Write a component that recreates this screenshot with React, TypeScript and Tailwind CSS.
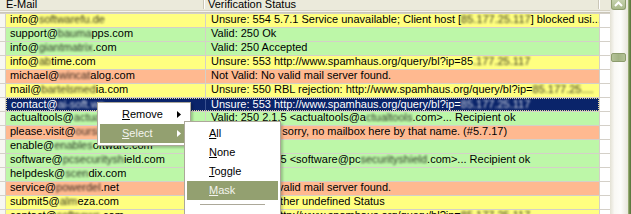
import React from 'react';

type Part = string | { b: string };

interface Row {
  email: Part[];
  status: Part[];
  tone: 'y' | 'g' | 'o' | 'sel';
}

const TONES: Record<Row['tone'], string> = {
  y: 'bg-[#ffff80] text-black',
  g: 'bg-[#bdf7a8] text-black',
  o: 'bg-[#ffb990] text-black',
  sel: 'bg-[#0a246a] text-white',
};

const ROWS: Row[] = [
  { tone: 'y', email: ['info@', { b: 'softwarefu.de' }], status: ['Unsure: 554 5.7.1 Service unavailable; Client host [', { b: '85.177.25.117' }, '] blocked usi...'] },
  { tone: 'g', email: ['support@', { b: 'bauma' }, 'pps.com'], status: ['Valid: 250 Ok'] },
  { tone: 'g', email: ['info@', { b: 'giantmatrix' }, '.com'], status: ['Valid: 250 Accepted'] },
  { tone: 'y', email: ['info@', { b: 'ab' }, 'time.com'], status: ['Unsure: 553 http://www.spamhaus.org/query/bl?ip=85', { b: '.177.25.117' }] },
  { tone: 'o', email: ['michael@', { b: 'wincat' }, 'alog.com'], status: ['Not Valid: No valid mail server found.'] },
  { tone: 'y', email: ['mail@', { b: 'bartelsmed' }, 'ia.com'], status: ['Unsure: 550 RBL rejection: http://www.spamhaus.org/query/bl?ip=', { b: '85.177.25....' }] },
  { tone: 'sel', email: ['contact@', { b: 'ai-soft.wa' }], status: ['Unsure: 553 http://www.spamhaus.org/query/bl?ip=', { b: '85.177.25.117' }] },
  { tone: 'g', email: ['actualtools@', { b: 'actualtools.com' }], status: ['Valid: 250 2.1.5 <actualtools@a', { b: 'ctualtools' }, '.com>... Recipient ok'] },
  { tone: 'o', email: ['please.visit@', { b: 'oursite.com' }], status: ['Not Valid: 550 sorry, no mailbox here by that name. (#5.7.17)'] },
  { tone: 'g', email: ['enable@', { b: 'enables' }, 'oftware.com'], status: ['Valid: 250 OK'] },
  { tone: 'g', email: ['software@', { b: 'pcsecuritysh' }, 'ield.com'], status: ['Valid: 250 2.1.5 <software@pc', { b: 'securityshield' }, '.com>... Recipient ok'] },
  { tone: 'g', email: ['helpdesk@', { b: 'scen' }, 'dix.com'], status: ['Valid: 250 Ok'] },
  { tone: 'o', email: ['service@', { b: 'powerdel' }, '.net'], status: ['Not Valid: No valid mail server found.'] },
  { tone: 'y', email: ['submit5@', { b: 'alm' }, 'eza.com'], status: ['Unsure: Any other undefined Status'] },
  { tone: 'y', email: ['contact@', { b: 'softnews' }, '.com'], status: ['Unsure: 553 http://www.spamhaus.org/query/bl?ip=', { b: '85.177.25.117' }] },
];

function Text({ parts }: { parts: Part[] }) {
  return (
    <>
      {parts.map((p, i) =>
        typeof p === 'string' ? (
          <span key={i}>{p}</span>
        ) : (
          <span key={i} className="inline-block blur-[1.3px] opacity-80">
            {p.b}
          </span>
        )
      )}
    </>
  );
}

function Arrow({ white }: { white?: boolean }) {
  return (
    <svg width="4" height="7" viewBox="0 0 4 7" className="ml-auto">
      <polygon points="0,0 4,3.5 0,7" fill={white ? '#ffffff' : '#000000'} />
    </svg>
  );
}

function MenuItem({ label, hot, active, sub }: { label: string; hot: number; active?: boolean; sub?: boolean }) {
  return (
    <div
      className={`flex items-center h-[19px] pl-[22px] pr-[7px] ${
        active ? 'bg-[#93a070] text-[#f4f4ee]' : 'text-black'
      }`}
    >
      <span>
        {label.slice(0, hot)}
        <u className="underline-offset-1">{label.slice(hot, hot + 1)}</u>
        {label.slice(hot + 1)}
      </span>
      {sub && <Arrow white={active} />}
    </div>
  );
}

export default function App() {
  return (
    <div className="relative w-[631px] h-[214px] overflow-hidden bg-white font-['Liberation_Sans',Arial,sans-serif] text-[11px]">
      <div className="flex h-full">
        {/* list */}
        <div className="w-[610px] h-full overflow-hidden">
          {/* header */}
          <div className="flex h-[10px] bg-[#ebeadb] overflow-hidden leading-[13px] text-black">
            <div className="w-[203px] pl-[6px] -mt-[2px]">E-Mail</div>
            <div className="w-px h-[9px] bg-[#cbc7b8]" />
            <div className="w-px h-[9px] bg-white" />
            <div className="w-[393px] pl-[3px] -mt-[2px]">Verification Status</div>
            <div className="w-px h-[9px] bg-[#cbc7b8]" />
            <div className="w-px h-[9px] bg-white" />
          </div>
          <div className="h-px bg-[#d6d2c2]" />
          <div className="h-px bg-[#f4f3ee]" />
          <div className="h-px bg-[#cbc7b8]" />
          <div className="h-px bg-[#d4d0c8]" />

          {/* rows */}
          {ROWS.map((r, i) => (
            <div key={i} className="flex h-[14px] border-b border-[#d4d0c8] leading-[11px]">
              <div className="w-[5px] bg-[#f7f7f3]" />
              <div className="w-px bg-[#d4d0c8]" />
              <div
                className={`w-[199px] pl-[4px] overflow-hidden whitespace-nowrap ${TONES[r.tone]} ${
                  r.tone === 'sel' ? 'border-y border-l border-dotted border-[#e9d79a]' : ''
                }`}
              >
                <Text parts={r.email} />
              </div>
              <div className={`w-px ${r.tone === 'sel' ? 'bg-[#3a5290]' : 'bg-[#d4d0c8]'}`} />
              <div
                className={`w-[393px] pl-[5px] overflow-hidden whitespace-nowrap ${TONES[r.tone]} ${
                  r.tone === 'sel' ? 'border-y border-r border-dotted border-[#e9d79a]' : ''
                }`}
              >
                <Text parts={r.status} />
              </div>
              <div className="w-px bg-[#d4d0c8]" />
              <div className="flex-1 bg-white" />
            </div>
          ))}
        </div>

        {/* scrollbar */}
        <div className="w-[18px] h-full flex flex-col bg-[linear-gradient(to_right,#e3e1d4,#f9f8f4_25%,#fdfdfb_60%,#e8e6dc)]">
          <div className="shrink-0 ml-[1px] w-[15px] h-[10px] rounded-b-[3px] border border-t-0 border-[#8d9c6d] bg-[linear-gradient(to_bottom,#c5d1ad,#a9b98a)] flex items-start justify-center">
            <svg width="9" height="6" viewBox="0 0 9 6" className="mt-[1px]">
              <polyline points="1,5 4.5,1.5 8,5" fill="none" stroke="#ffffff" strokeWidth="2" />
            </svg>
          </div>
          <div className="shrink-0 mt-[43px] ml-[1px] w-[15px] h-[9px] rounded-[2px] border border-[#8d9c6d] bg-[linear-gradient(to_right,#b4c297,#a3b384,#b4c297)]" />
        </div>

        {/* window frame */}
        <div className="w-[3px] h-full bg-[linear-gradient(to_right,#a8ba86,#6f8a4c,#55703a)]" />
      </div>

      {/* context menu */}
      <div className="absolute left-[97px] top-[102px] w-[94px] p-[2px] bg-white border border-[#aca899] shadow-[2px_2px_2px_rgba(0,0,0,0.2)] leading-[13px]">
        <MenuItem label="Remove" hot={0} sub />
        <MenuItem label="Select" hot={0} sub active />
      </div>

      {/* sub menu */}
      <div className="absolute left-[184px] top-[121px] w-[97px] p-[2px] bg-white border border-[#aca899] shadow-[2px_2px_2px_rgba(0,0,0,0.2)] leading-[13px]">
        <MenuItem label="All" hot={0} />
        <MenuItem label="None" hot={0} />
        <MenuItem label="Toggle" hot={0} />
        <MenuItem label="Mask" hot={0} active />
        <div className="h-[9px] flex items-center px-[13px]">
          <div className="h-px w-full bg-[#aca899]" />
        </div>
        <MenuItem label="Invert" hot={0} />
      </div>
    </div>
  );
}
